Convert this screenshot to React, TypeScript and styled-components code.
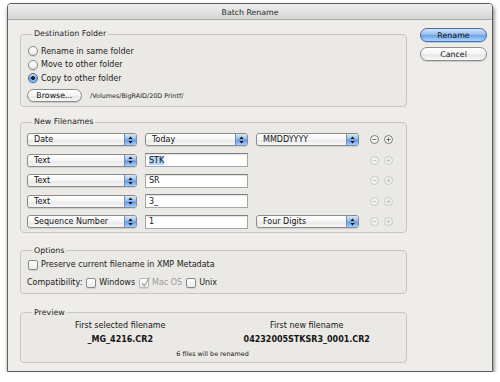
import React from "react";
import styled, { createGlobalStyle } from "styled-components";

const Global = createGlobalStyle`
  html, body { margin: 0; padding: 0; background: #ffffff; }
  body {
    font-family: "DejaVu Sans", "Noto Sans", sans-serif;
    font-size: 8px;
    color: #151515;
  }
`;

const Window = styled.div`
  box-sizing: border-box;
  margin: 3px 0 0 7px;
  width: 486px;
  height: 369px;
  border: 1px solid #5c5c5c;
  border-radius: 4px 4px 1px 1px;
  background: #efedea;
  box-shadow: 1px 3px 4px rgba(0, 0, 0, 0.55);
  display: flex;
  flex-direction: column;
  overflow: hidden;
`;

const TitleBar = styled.div`
  box-sizing: border-box;
  height: 16px;
  flex: none;
  padding-top: 1px;
  border-bottom: 1px solid #a9a9a9;
  background: linear-gradient(#efefef, #d5d5d5);
  display: flex;
  align-items: center;
  justify-content: center;
  font-size: 7.8px;
  color: #222;
`;

const Body = styled.div`
  flex: 1;
  display: flex;
  padding: 9px 4px 0 12px;
  gap: 13px;
`;

const MainColumn = styled.div`
  width: 387px;
  display: flex;
  flex-direction: column;
`;

const Group = styled.fieldset<{ $mt: number; $pt: number; $pb: number }>`
  margin: ${(p) => p.$mt}px 0 0 0;
  padding: ${(p) => p.$pt}px 6px ${(p) => p.$pb}px 6px;
  border: 1px solid #c9c6c1;
  border-radius: 4px;
  background: rgba(0, 0, 0, 0.015);
  min-width: 0;
`;

const Legend = styled.legend`
  padding: 0 2px;
  margin-left: 5px;
  line-height: 10px;
  font-size: 7.9px;
  color: #1e1e1e;
`;

const OptionRow = styled.div<{ $h: number; $mt?: number }>`
  height: ${(p) => p.$h}px;
  margin-top: ${(p) => p.$mt ?? 0}px;
  display: flex;
  align-items: center;
  gap: 3px;
  white-space: nowrap;
`;

const RadioDot = styled.span<{ $on?: boolean }>`
  box-sizing: border-box;
  width: 10px;
  height: 10px;
  margin-left: 1px;
  border-radius: 50%;
  border: 1px solid ${(p) => (p.$on ? "#46678f" : "#8a8a8a")};
  background: ${(p) =>
    p.$on
      ? "radial-gradient(circle at 50% 50%, #17253a 0 1.6px, transparent 2.2px), linear-gradient(#cfe2f8, #6ea6e9 55%, #9cc7f4)"
      : "linear-gradient(#ffffff, #e9e9e9)"};
  box-shadow: 0 1px 1px rgba(0, 0, 0, 0.12);
`;

const CheckBox = styled.span<{ $disabled?: boolean }>`
  box-sizing: border-box;
  width: 10px;
  height: 10px;
  margin-left: 1px;
  border-radius: 2px;
  border: 1px solid ${(p) => (p.$disabled ? "#b8b8b8" : "#8a8a8a")};
  background: linear-gradient(#ffffff, #ebebeb);
  box-shadow: 0 1px 1px rgba(0, 0, 0, 0.1);
  position: relative;
  flex: none;
  svg {
    position: absolute;
    left: 0px;
    top: -3px;
  }
`;

const Label = styled.span<{ $muted?: boolean; $ml?: number }>`
  color: ${(p) => (p.$muted ? "#9a9a9a" : "#1a1a1a")};
  margin-left: ${(p) => p.$ml ?? 0}px;
`;

const BrowseRow = styled.div`
  margin-top: 4px;
  display: flex;
  align-items: center;
  gap: 8px;
`;

const PushButton = styled.div<{ $w: number; $h: number; $default?: boolean }>`
  box-sizing: border-box;
  width: ${(p) => p.$w}px;
  height: ${(p) => p.$h}px;
  border-radius: 7px;
  border: 1px solid ${(p) => (p.$default ? "#3f6ea8" : "#8d8d8d")};
  background: ${(p) =>
    p.$default
      ? "linear-gradient(#d2e5fa, #96c0f0 45%, #6aa2e6 55%, #b4d6fa)"
      : "linear-gradient(#ffffff, #f4f4f4 50%, #e6e6e6 55%, #f7f7f7)"};
  box-shadow: 0 1px 1px rgba(0, 0, 0, 0.15);
  display: flex;
  align-items: center;
  justify-content: center;
  font-size: 7.9px;
  color: #111;
`;

const PathText = styled.span`
  font-size: 6.4px;
  color: #222;
`;

const ButtonColumn = styled.div`
  margin-top: -1px;
  width: 67px;
  display: flex;
  flex-direction: column;
  gap: 5px;
`;

const Rows = styled.div`
  display: flex;
  flex-direction: column;
  gap: 6.6px;
`;

const NameRow = styled.div`
  height: 14px;
  display: flex;
  align-items: center;
  gap: 8px;
`;

const PopupBox = styled.div<{ $w: number }>`
  box-sizing: border-box;
  width: ${(p) => p.$w}px;
  height: 13px;
  flex: none;
  border: 1px solid #8b8b8b;
  border-radius: 3px;
  background: linear-gradient(#ffffff, #f5f5f5 50%, #e8e8e8 52%, #f6f6f6);
  box-shadow: 0 1px 1px rgba(0, 0, 0, 0.12);
  display: flex;
  align-items: center;
  overflow: hidden;
`;

const PopupLabel = styled.span`
  flex: 1;
  padding-left: 6px;
  white-space: nowrap;
  line-height: 11px;
`;

const PopupArrow = styled.span`
  width: 11px;
  height: 100%;
  border-left: 1px solid #6e8fbd;
  background: linear-gradient(#d6e7fa, #8fbbee 48%, #5e99e2 52%, #a9cdf6);
  display: flex;
  align-items: center;
  justify-content: center;
`;

const Field = styled.div<{ $w: number }>`
  box-sizing: border-box;
  width: ${(p) => p.$w}px;
  height: 14px;
  flex: none;
  border: 1px solid #a6a6a6;
  border-top-color: #7e7e7e;
  background: #ffffff;
  box-shadow: inset 0 1px 1px rgba(0, 0, 0, 0.12);
  padding-left: 3px;
  display: flex;
  align-items: center;
`;

const Selected = styled.span`
  background: #b4d3f9;
`;

const Spacer = styled.span<{ $w: number }>`
  width: ${(p) => p.$w}px;
  flex: none;
`;

const PlusMinus = styled.div`
  margin-left: 3px;
  display: flex;
  gap: 5px;
`;

const PreviewGrid = styled.div`
  display: grid;
  grid-template-columns: 1fr 1fr;
  line-height: 14px;
  text-align: center;
`;

const PreviewName = styled.span`
  font-weight: 700;
`;

const PreviewNote = styled.div`
  grid-column: 1 / span 2;
  font-size: 6.4px;
  line-height: 14px;
  padding-right: 2px;
`;

const Arrows = () => (
  <svg width="5" height="8" viewBox="0 0 5 8">
    <path d="M2.5 0.5 L4.6 3 H0.4 Z" fill="#111" />
    <path d="M2.5 7.5 L4.6 5 H0.4 Z" fill="#111" />
  </svg>
);

const Popup = ({ w, label }: { w: number; label: string }) => (
  <PopupBox $w={w}>
    <PopupLabel>{label}</PopupLabel>
    <PopupArrow>
      <Arrows />
    </PopupArrow>
  </PopupBox>
);

const Round = ({ plus, enabled }: { plus?: boolean; enabled: boolean }) => {
  const c = enabled ? "#6d6d6d" : "#c2c2c2";
  return (
    <svg width="9" height="9" viewBox="0 0 9 9">
      <circle cx="4.5" cy="4.5" r="4" fill={enabled ? "#f8f8f8" : "#f3f2f0"} stroke={c} strokeWidth="0.9" />
      <path d="M2.5 4.5 H6.5" stroke={c} strokeWidth="1" />
      {plus && <path d="M4.5 2.5 V6.5" stroke={c} strokeWidth="1" />}
    </svg>
  );
};

const Check = ({ color }: { color: string }) => (
  <svg width="11" height="12" viewBox="0 0 11 12">
    <path d="M2 7 L4.3 10 L9.5 1.5" fill="none" stroke={color} strokeWidth="1.2" />
  </svg>
);

type Row = {
  type: string;
  second: { kind: "popup" | "field"; text: string; selected?: boolean };
  third?: string;
  enabled: boolean;
};

const rows: Row[] = [
  { type: "Date", second: { kind: "popup", text: "Today" }, third: "MMDDYYYY", enabled: true },
  { type: "Text", second: { kind: "field", text: "STK", selected: true }, enabled: false },
  { type: "Text", second: { kind: "field", text: "SR" }, enabled: false },
  { type: "Text", second: { kind: "field", text: "3_" }, enabled: false },
  { type: "Sequence Number", second: { kind: "field", text: "1" }, third: "Four Digits", enabled: false },
];

export default function App() {
  return (
    <>
      <Global />
      <Window>
        <TitleBar>Batch Rename</TitleBar>
        <Body>
          <MainColumn>
            <Group $mt={0} $pt={5.5} $pb={4}>
              <Legend>Destination Folder</Legend>
              <OptionRow $h={13.5}>
                <RadioDot />
                <Label>Rename in same folder</Label>
              </OptionRow>
              <OptionRow $h={13.5}>
                <RadioDot />
                <Label>Move to other folder</Label>
              </OptionRow>
              <OptionRow $h={13.5}>
                <RadioDot $on />
                <Label>Copy to other folder</Label>
              </OptionRow>
              <BrowseRow>
                <PushButton $w={55} $h={13}>Browse...</PushButton>
                <PathText>/Volumes/BigRAID/20D Printf/</PathText>
              </BrowseRow>
            </Group>

            <Group $mt={10} $pt={5.5} $pb={3}>
              <Legend>New Filenames</Legend>
              <Rows>
                {rows.map((r, i) => (
                  <NameRow key={i}>
                    <Popup w={110} label={r.type} />
                    {r.second.kind === "popup" ? (
                      <Popup w={103} label={r.second.text} />
                    ) : (
                      <Field $w={103}>
                        {r.second.selected ? <Selected>{r.second.text}</Selected> : r.second.text}
                      </Field>
                    )}
                    {r.third ? <Popup w={103} label={r.third} /> : <Spacer $w={103} />}
                    <PlusMinus>
                      <Round enabled={r.enabled} />
                      <Round plus enabled={r.enabled} />
                    </PlusMinus>
                  </NameRow>
                ))}
              </Rows>
            </Group>

            <Group $mt={13} $pt={3} $pb={4}>
              <Legend>Options</Legend>
              <OptionRow $h={12}>
                <CheckBox />
                <Label>Preserve current filename in XMP Metadata</Label>
              </OptionRow>
              <OptionRow $h={12} $mt={6}>
                <Label>Compatibility:</Label>
                <CheckBox />
                <Label>Windows</Label>
                <CheckBox $disabled>
                  <Check color="#9e9e9e" />
                </CheckBox>
                <Label $muted>Mac OS</Label>
                <CheckBox />
                <Label>Unix</Label>
              </OptionRow>
            </Group>

            <Group $mt={14} $pt={1} $pb={1}>
              <Legend>Preview</Legend>
              <PreviewGrid>
                <span>First selected filename</span>
                <span>First new filename</span>
                <PreviewName>_MG_4216.CR2</PreviewName>
                <PreviewName>04232005STKSR3_0001.CR2</PreviewName>
                <PreviewNote>6 files will be renamed</PreviewNote>
              </PreviewGrid>
            </Group>
          </MainColumn>

          <ButtonColumn>
            <PushButton $w={67} $h={14} $default>Rename</PushButton>
            <PushButton $w={67} $h={14}>Cancel</PushButton>
          </ButtonColumn>
        </Body>
      </Window>
    </>
  );
}
